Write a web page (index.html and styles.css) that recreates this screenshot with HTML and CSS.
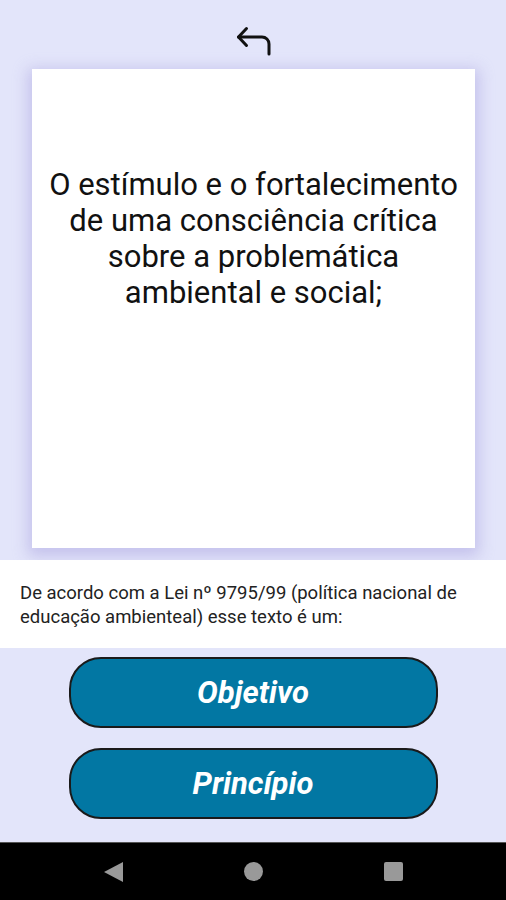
FILE: index.html
```html
<!DOCTYPE html>
<html lang="pt-br">
<head>
  <meta charset="UTF-8" />
  <meta name="viewport" content="width=device-width, initial-scale=1.0" />
  <title>Quiz Educação Ambiental</title>
  <link rel="stylesheet" href="styles.css">
</head>
<body>

<div class="app">
  <header class="top">
    <svg class="back" width="36" height="32" viewBox="0 0 36 32" fill="none" stroke="#111" stroke-width="3" stroke-linecap="round" stroke-linejoin="round">
      <path d="M10.5 3.5 L2.5 12 L10.5 20.5" />
      <path d="M2.5 12 H26 A7 7 0 0 1 33 19 V29" />
    </svg>
  </header>

  <div class="card">
    <p>O estímulo e o fortalecimento de uma consciência crítica sobre a problemática ambiental e social;</p>
  </div>

  <div class="question">
    De acordo com a Lei nº 9795/99 (política nacional de educação ambienteal) esse texto é um:
  </div>

  <div class="answers">
    <button class="btn">Objetivo</button>
    <button class="btn">Princípio</button>
  </div>
</div>

<nav class="sysbar">
  <span class="tri"></span>
  <span class="dot"></span>
  <span class="sq"></span>
</nav>

</body>
</html>
```

FILE: styles.css
```css
body { margin: 0; font-family: Roboto, "Liberation Sans", sans-serif; background: #e3e5fa; color: #111; }
.app { height: 842px; display: flex; flex-direction: column; }
.top { height: 69px; display: flex; justify-content: center; align-items: flex-start; }
.back { margin-top: 25px; margin-left: 1px; }
.card { margin: 0 31px 0 32px; height: 479px; background: #fff; display: flex; align-items: center; justify-content: center;
        box-shadow: 0 4px 14px 4px rgba(160,150,220,0.45); }
.card p { margin: 0 0 140px; padding: 0 12px; text-align: center; font-size: 31px; line-height: 36px; color: #111; }
.question { margin-top: 12px; background: #fff; padding: 21px 20px 19px; font-size: 18.5px; line-height: 24px; color: #222; }
.answers { display: flex; flex-direction: column; align-items: center; gap: 20px; padding-top: 9px; }
.btn { width: 369px; height: 71px; background: #0277a3; color: #fff; border: 2px solid #1a1a1a; border-radius: 32px;
       font-family: Roboto, "Liberation Sans", sans-serif; font-size: 31px; font-weight: bold; font-style: italic; cursor: pointer; }
.sysbar { height: 58px; background: #000; display: flex; justify-content: center; align-items: center; gap: 121px; border-top: 1px solid #555; box-sizing: border-box; }
.tri { width: 0; height: 0; border-top: 10px solid transparent; border-bottom: 10px solid transparent; border-right: 19px solid #999; }
.dot { width: 19px; height: 19px; border-radius: 50%; background: #999; }
.sq { width: 19px; height: 19px; border-radius: 2px; background: #999; }
```
